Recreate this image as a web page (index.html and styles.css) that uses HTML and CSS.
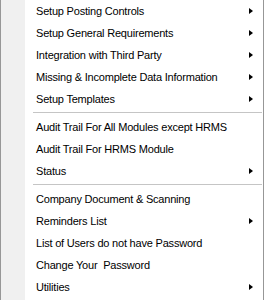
FILE: index.html
```html
<!DOCTYPE html>
<html>
<head>
<meta charset="utf-8">
<link rel="stylesheet" href="styles.css">
</head>
<body>
<div class="menu">
  <div class="item"><span>Setup Posting Controls</span><i class="arrow"></i></div>
  <div class="item"><span>Setup General Requirements</span><i class="arrow"></i></div>
  <div class="item"><span>Integration with Third Party</span><i class="arrow"></i></div>
  <div class="item"><span>Missing &amp; Incomplete Data Information</span><i class="arrow"></i></div>
  <div class="item"><span>Setup Templates</span><i class="arrow"></i></div>
  <div class="sep"></div>
  <div class="item"><span>Audit Trail For All Modules except HRMS</span></div>
  <div class="item"><span>Audit Trail For HRMS Module</span></div>
  <div class="item"><span>Status</span><i class="arrow"></i></div>
  <div class="sep"></div>
  <div class="item"><span>Company Document &amp; Scanning</span></div>
  <div class="item"><span>Reminders List</span><i class="arrow"></i></div>
  <div class="item"><span>List of Users do not have Password</span></div>
  <div class="item"><span>Change Your&nbsp; Password</span></div>
  <div class="item"><span>Utilities</span><i class="arrow"></i></div>
</div>
</body>
</html>
```
FILE: styles.css
```css
html, body {
  margin: 0;
  padding: 0;
  background: #ffffff;
}
.menu {
  width: 262px;
  height: 300px;
  border-left: 1px solid #979797;
  border-right: 1px solid #979797;
  background: linear-gradient(to right, #f0f0f0 24px, #ffffff 24px);
  display: flex;
  flex-direction: column;
  font-family: "Liberation Sans", Arial, sans-serif;
  font-size: 11px;
  letter-spacing: -0.2px;
  color: #000;
  overflow: hidden;
}
.item {
  height: 22px;
  line-height: 22px;
  display: flex;
  align-items: center;
  justify-content: space-between;
  padding-left: 35px;
  padding-right: 10px;
  white-space: nowrap;
  flex: none;
}
.arrow {
  display: block;
  width: 0;
  height: 0;
  border-left: 4px solid #000;
  border-top: 3.5px solid transparent;
  border-bottom: 3.5px solid transparent;
}
.sep {
  flex: none;
  height: 1px;
  margin: 2px 1px 2px 32px;
  background: #c5c5c5;
  border-bottom: 1px solid #ffffff;
}
```
